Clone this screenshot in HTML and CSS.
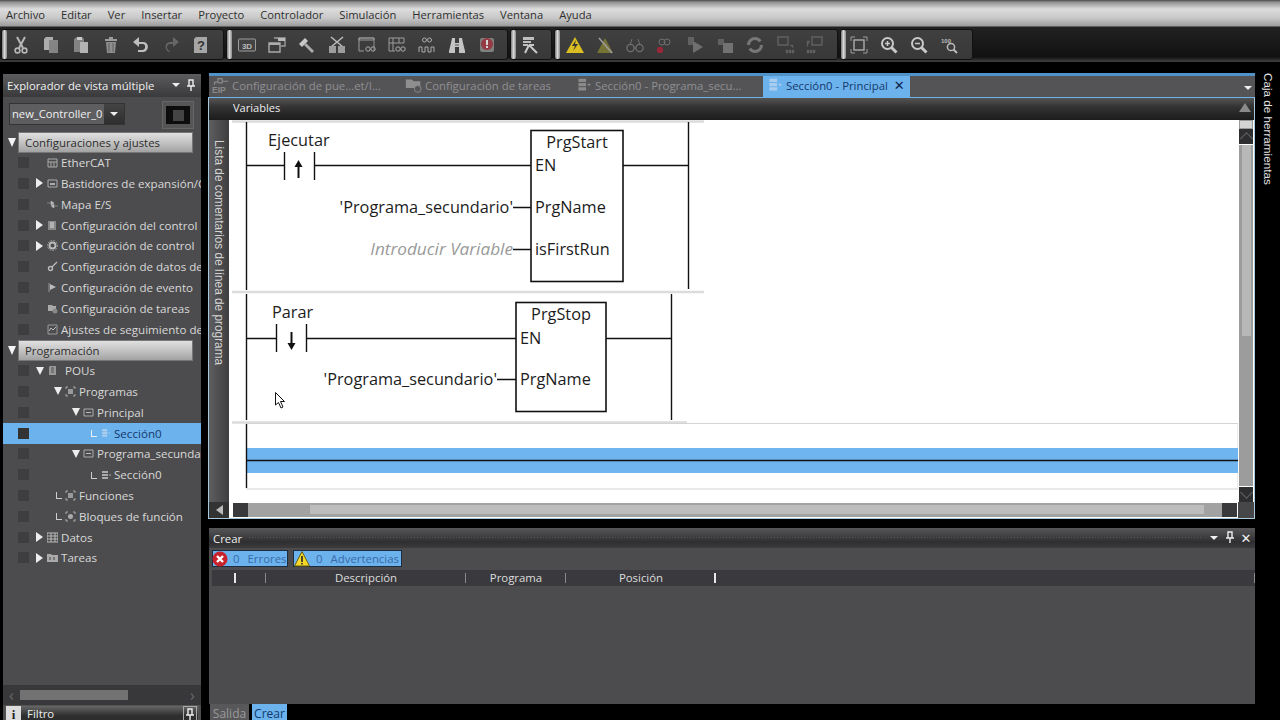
FILE: index.html
```html
<!DOCTYPE html>
<html lang="es">
<head>
  <meta charset="UTF-8" />
  <title>Sysmac Studio</title>
  <link rel="stylesheet" href="styles.css">
</head>
<body>

  <!-- shared icons -->
  <svg class="sprite" xmlns="http://www.w3.org/2000/svg">
    <symbol id="i-cut" viewBox="0 0 20 20"><path d="M6 2l6 11M14 2L8 13" stroke="#c8c8c8" stroke-width="2" fill="none"/><circle cx="6.5" cy="15.5" r="2.4" fill="none" stroke="#c8c8c8" stroke-width="1.6"/><circle cx="13.5" cy="15.5" r="2.4" fill="none" stroke="#c8c8c8" stroke-width="1.6"/></symbol>
    <symbol id="i-copy" viewBox="0 0 20 20"><path d="M5 2h7v13H3V4z" fill="#bdbdbd"/><path d="M8 5h9v13H8z" fill="#8f8f8f"/></symbol>
    <symbol id="i-paste" viewBox="0 0 20 20"><path d="M3 4l3-2h5l2 2v13H3z" fill="#8d8d8d"/><path d="M6 2h5v3H6z" fill="#ddd"/><path d="M9 7h8v11H9z" fill="#c4c4c4"/></symbol>
    <symbol id="i-trash" viewBox="0 0 20 20"><path d="M4 4h12v2H4zM8 2h4v2H8z" fill="#aaa"/><path d="M5 7h10l-1 11H6z" fill="#9a9a9a"/><path d="M8 8v9M12 8v9" stroke="#666"/></symbol>
    <symbol id="i-undo" viewBox="0 0 20 20"><path d="M8 2L2 7l6 5V9h4c3 0 3 6-1 6H7v2h5c6 0 7-10 0-10H8z" fill="#d0d0d0"/></symbol>
    <symbol id="i-redo" viewBox="0 0 20 20"><path d="M12 2l6 5-6 5V9H9c-4 0-4 6 0 7v1c-6-1-6-10 0-10h3z" fill="#6c6c6c"/></symbol>
    <symbol id="i-help" viewBox="0 0 20 20"><path d="M5 2h11v16H3V4z" fill="#b5b5b5"/><text x="10" y="15" class="glyph">?</text></symbol>
    <symbol id="i-3d" viewBox="0 0 20 20"><rect x="1.5" y="4" width="17" height="12" rx="1" fill="#444" stroke="#aaa"/><text x="10" y="13.5" class="glyph-s">3D</text></symbol>
    <symbol id="i-win" viewBox="0 0 20 20"><path d="M7 3h11v8h-4" fill="none" stroke="#aaa" stroke-width="1.4"/><path d="M11 3h7v3h-7z" fill="#ccc"/><path d="M2 8h11v9H2z" fill="none" stroke="#bbb" stroke-width="1.4"/><path d="M2 8h11v2H2z" fill="#bbb"/></symbol>
    <symbol id="i-hammer" viewBox="0 0 20 20"><path d="M2 9l6-6 3 3-6 6z" fill="#ddd"/><path d="M9 8l8 8-2 2-8-8z" fill="#bbb"/></symbol>
    <symbol id="i-cross" viewBox="0 0 20 20"><path d="M4 2l12 10M16 2L4 12" stroke="#ccc" stroke-width="1.6"/><path d="M2 11h7v7H2zM11 11h7v7h-7z" fill="#aaa"/></symbol>
    <symbol id="i-tbl" viewBox="0 0 20 20"><path d="M2 3h15v13" fill="none" stroke="#999"/><path d="M2 3h15v2H2zM2 3v13h5" fill="none" stroke="#aaa"/><circle cx="11" cy="14" r="2.2" fill="none" stroke="#bbb"/><circle cx="16" cy="14" r="2.2" fill="none" stroke="#bbb"/></symbol>
    <symbol id="i-tbl2" viewBox="0 0 20 20"><path d="M2 3h15v5H2zM2 8v8h6M6 3v13M12 3v5" fill="none" stroke="#aaa"/><circle cx="11" cy="14" r="2.2" fill="none" stroke="#bbb"/><circle cx="16" cy="14" r="2.2" fill="none" stroke="#bbb"/></symbol>
    <symbol id="i-wave" viewBox="0 0 20 20"><circle cx="7.5" cy="5" r="2" fill="none" stroke="#bbb"/><circle cx="12.5" cy="5" r="2" fill="none" stroke="#bbb"/><path d="M2 17v-5h3v5h3v-5h3v5h3v-5h3v5" fill="none" stroke="#bbb"/></symbol>
    <symbol id="i-bino" viewBox="0 0 20 20"><path d="M5 3h3v5h4V3h3l1 5 2 8v2h-6v-6H8v6H2v-2l2-8z" fill="#d8d8d8"/><path d="M8 9h4v2H8z" fill="#999"/></symbol>
    <symbol id="i-alert" viewBox="0 0 20 20"><rect x="3" y="3" width="14" height="14" rx="2" fill="#8a8a8a"/><circle cx="10" cy="9" r="6" fill="#a33a45"/><path d="M9 5h2v5H9zM9 11h2v2H9z" fill="#eee"/></symbol>
    <symbol id="i-book" viewBox="0 0 20 20"><path d="M3 2h11v3H3zM3 6h8v2H3zM3 9h5v2H3z" fill="#d0d0d0"/><path d="M9 10l8 8M9 10l-4 8M9 10h5" stroke="#ddd" stroke-width="2" fill="none"/></symbol>
    <symbol id="i-warn" viewBox="0 0 20 20"><path d="M10 2l9 16H1z" fill="#f2d21f"/><path d="M11 5L7 11h3l-2 5 5-7h-3z" fill="#333"/></symbol>
    <symbol id="i-warnoff" viewBox="0 0 20 20"><path d="M10 3l8 15H2z" fill="#7f7b36"/><path d="M4 3l13 15" stroke="#aaa" stroke-width="1.6"/></symbol>
    <symbol id="i-glass" viewBox="0 0 20 20"><circle cx="5.5" cy="13" r="3.6" fill="none" stroke="#777" stroke-width="1.3"/><circle cx="14.5" cy="13" r="3.6" fill="none" stroke="#777" stroke-width="1.3"/><path d="M5 10L7 4M15 10l-2-6M9 13h2" stroke="#777" fill="none"/></symbol>
    <symbol id="i-glassred" viewBox="0 0 20 20"><circle cx="12" cy="7" r="3" fill="none" stroke="#777"/><circle cx="7" cy="7" r="3" fill="none" stroke="#777"/><rect x="2" y="12" width="6" height="6" rx="2" fill="#a8243a"/></symbol>
    <symbol id="i-play" viewBox="0 0 20 20"><path d="M3 2h6v8H3z" fill="#666"/><path d="M8 6l10 6-10 6z" fill="#777"/></symbol>
    <symbol id="i-stop" viewBox="0 0 20 20"><path d="M3 4h6v6H3z" fill="#666"/><path d="M8 8h10v10H8z" fill="#7a7a7a"/></symbol>
    <symbol id="i-cycle" viewBox="0 0 20 20"><circle cx="10" cy="10" r="6.5" fill="none" stroke="#808080" stroke-width="3" stroke-dasharray="16 4"/></symbol>
    <symbol id="i-mon1" viewBox="0 0 20 20"><path d="M3 2h10v8H3z" fill="none" stroke="#666" stroke-width="1.4"/><path d="M15 10h3v3M11 15h2v3h-2zM14 15h2v3h-2zM17 15h2v3h-2z" fill="#666" stroke="#666" stroke-width=".4"/></symbol>
    <symbol id="i-mon2" viewBox="0 0 20 20"><path d="M7 2h10v8H7z" fill="none" stroke="#666" stroke-width="1.4"/><path d="M5 6H2v6M2 15h2v3H2zM5 15h2v3H5zM8 15h2v3H8z" fill="#666" stroke="#666" stroke-width=".4"/></symbol>
    <symbol id="i-fit" viewBox="0 0 20 20"><rect x="5" y="5" width="10" height="10" fill="none" stroke="#bbb" stroke-width="1.4"/><path d="M2 6V2h4M14 2h4v4M18 14v4h-4M6 18H2v-4" fill="none" stroke="#aaa"/></symbol>
    <symbol id="i-zin" viewBox="0 0 20 20"><circle cx="8.5" cy="8.5" r="5.5" fill="none" stroke="#ddd" stroke-width="2"/><path d="M12.5 12.5l5 5" stroke="#ddd" stroke-width="3"/><path d="M6 8.5h5M8.5 6v5" stroke="#ddd" stroke-width="1.5"/></symbol>
    <symbol id="i-zout" viewBox="0 0 20 20"><circle cx="8.5" cy="8.5" r="5.5" fill="none" stroke="#ddd" stroke-width="2"/><path d="M12.5 12.5l5 5" stroke="#ddd" stroke-width="3"/><path d="M6 8.5h5" stroke="#ddd" stroke-width="1.5"/></symbol>
    <symbol id="i-z100" viewBox="0 0 20 20"><text x="7" y="8" class="glyph-t">100</text><circle cx="12" cy="12" r="3.6" fill="none" stroke="#ccc" stroke-width="1.5"/><path d="M14.5 14.5l3.5 3.5" stroke="#ccc" stroke-width="2"/></symbol>
    <symbol id="n-grid" viewBox="0 0 11 11"><path d="M1 2h9v8H1zM1 5h9M4 5v5M7 5v5" fill="none" stroke="#aaa"/></symbol>
    <symbol id="n-rack" viewBox="0 0 11 11"><path d="M1 2h9v7H1z" fill="none" stroke="#aaa"/><path d="M3 5h5v2H3z" fill="#aaa"/></symbol>
    <symbol id="n-io" viewBox="0 0 11 11"><path d="M4 2l3 2-3 2zM0 4h5M7 5L4 7l3 2zM6 7h5" fill="#bbb" stroke="#bbb" stroke-width=".5"/></symbol>
    <symbol id="n-ctrl" viewBox="0 0 11 11"><path d="M1 1h8v9H1z" fill="#888"/><path d="M3 3h4M3 5h4M3 7h4" stroke="#ddd"/></symbol>
    <symbol id="n-gear" viewBox="0 0 11 11"><circle cx="5.5" cy="5.5" r="3" fill="none" stroke="#bbb" stroke-width="2"/><circle cx="5.5" cy="5.5" r="5" fill="none" stroke="#aaa" stroke-dasharray="1.5 1.5"/></symbol>
    <symbol id="n-pen" viewBox="0 0 11 11"><circle cx="3.5" cy="7.5" r="2" fill="none" stroke="#bbb" stroke-width="1.4"/><path d="M5 6l5-5" stroke="#bbb" stroke-width="1.2"/></symbol>
    <symbol id="n-flag" viewBox="0 0 11 11"><path d="M2 1v9" stroke="#999"/><path d="M3 2l6 3-6 3z" fill="#bbb"/></symbol>
    <symbol id="n-task" viewBox="0 0 11 11"><path d="M1 2h4l1 1h3v5H1z" fill="#aaa"/><circle cx="8" cy="8" r="2.5" fill="#888"/></symbol>
    <symbol id="n-trace" viewBox="0 0 11 11"><path d="M1 1h9v9H1z" fill="none" stroke="#999"/><path d="M2 7l2-3 2 2 3-3" fill="none" stroke="#bbb"/></symbol>
    <symbol id="n-pou" viewBox="0 0 11 11"><path d="M3 1h6v9H2V2z" fill="#999"/><path d="M4 3h3M4 5h3M4 7h3" stroke="#555"/></symbol>
    <symbol id="n-prgs" viewBox="0 0 11 11"><path d="M1 3V1h2M8 1h2v2M10 8v2H8M3 10H1V8" fill="none" stroke="#aaa"/><path d="M3 3h5v5H3z" fill="#999"/></symbol>
    <symbol id="n-prg" viewBox="0 0 11 11"><path d="M1 2h9v7H1z" fill="none" stroke="#aaa"/><path d="M3 5.5h5" stroke="#bbb"/></symbol>
    <symbol id="n-sec" viewBox="0 0 11 11"><path d="M2 2h6v2H2zM2 5h6v2H2zM2 8h6v2H2z" fill="#aaa"/><path d="M9 6h2" stroke="#aaa"/></symbol>
    <symbol id="n-fb" viewBox="0 0 11 11"><circle cx="5.5" cy="5.5" r="2.5" fill="#aaa"/><path d="M1 3V1h2M8 1h2v2M10 8v2H8M3 10H1V8" fill="none" stroke="#aaa"/></symbol>
    <symbol id="n-tbl" viewBox="0 0 11 11"><path d="M0 1h11v9H0zM0 4h11M0 7h11M4 1v9M8 1v9" fill="none" stroke="#bbb"/></symbol>
    <symbol id="n-fold" viewBox="0 0 11 11"><path d="M0 2h4l1 1h6v7H0z" fill="#aaa"/><path d="M3 5v3M7 5v3" stroke="#444"/></symbol>
    <symbol id="t-eip" viewBox="0 0 20 20"><text x="0" y="19" class="glyph-e">EIP</text><path d="M3 9V6h4V2h5v5H7M12 5h7" fill="none" stroke="#8a8a8a" stroke-width="1.4"/></symbol>
    <symbol id="t-task" viewBox="0 0 20 20"><path d="M1 3h7l2 2h8v8H1z" fill="#8f8f8f"/><circle cx="15" cy="14" r="4" fill="#555" stroke="#8f8f8f"/></symbol>
    <symbol id="t-sec" viewBox="0 0 20 20"><path d="M4 2h9v4H4zM4 7h9v4H4zM4 12h9v4H4z" fill="#8a8a8a"/><path d="M15 9h3" stroke="#8a8a8a" stroke-width="2"/></symbol>
    <symbol id="t-sec-on" viewBox="0 0 20 20"><path d="M4 2h9v4H4zM4 7h9v4H4zM4 12h9v4H4z" fill="#a9cdee"/><path d="M15 9h3" stroke="#a9cdee" stroke-width="2"/></symbol>
    <symbol id="i-pin" viewBox="0 0 10 12"><path d="M3 1h4v6H3zM1 7h8M5 7v5" fill="none" stroke="#eee" stroke-width="1.4"/></symbol>
  </svg>

  <nav class="menubar">
    <span>Archivo</span><span>Editar</span><span>Ver</span><span>Insertar</span><span>Proyecto</span>
    <span>Controlador</span><span>Simulación</span><span>Herramientas</span><span>Ventana</span><span>Ayuda</span>
  </nav>

  <div class="toolbar">
    <div class="tool-group g1">
      <i class="grip"></i>
      <svg class="tool"><use href="#i-cut"/></svg><svg class="tool"><use href="#i-copy"/></svg><svg class="tool"><use href="#i-paste"/></svg><svg class="tool"><use href="#i-trash"/></svg><svg class="tool"><use href="#i-undo"/></svg><svg class="tool"><use href="#i-redo"/></svg><svg class="tool"><use href="#i-help"/></svg>
    </div>
    <div class="tool-group g2">
      <i class="grip"></i>
      <svg class="tool"><use href="#i-3d"/></svg><svg class="tool"><use href="#i-win"/></svg><svg class="tool"><use href="#i-hammer"/></svg><svg class="tool"><use href="#i-cross"/></svg><svg class="tool"><use href="#i-tbl"/></svg><svg class="tool"><use href="#i-tbl2"/></svg><svg class="tool"><use href="#i-wave"/></svg><svg class="tool"><use href="#i-bino"/></svg><svg class="tool"><use href="#i-alert"/></svg>
    </div>
    <div class="tool-group g3">
      <i class="grip"></i>
      <svg class="tool"><use href="#i-book"/></svg>
    </div>
    <div class="tool-group g4">
      <i class="grip"></i>
      <svg class="tool"><use href="#i-warn"/></svg><svg class="tool"><use href="#i-warnoff"/></svg><svg class="tool"><use href="#i-glass"/></svg><svg class="tool"><use href="#i-glassred"/></svg><svg class="tool"><use href="#i-play"/></svg><svg class="tool"><use href="#i-stop"/></svg><svg class="tool"><use href="#i-cycle"/></svg><svg class="tool"><use href="#i-mon1"/></svg><svg class="tool"><use href="#i-mon2"/></svg>
    </div>
    <div class="tool-group g5">
      <i class="grip"></i>
      <svg class="tool"><use href="#i-fit"/></svg><svg class="tool"><use href="#i-zin"/></svg><svg class="tool"><use href="#i-zout"/></svg><svg class="tool"><use href="#i-z100"/></svg>
    </div>
  </div>

  <div class="workspace">

    <aside class="explorer">
      <div class="explorer-title">
        <span>Explorador de vista múltiple</span>
        <b class="tri-down"></b>
        <svg class="pin"><use href="#i-pin"/></svg>
      </div>
      <div class="controller-row">
        <div class="combo"><span>new_Controller_0</span><em><b class="tri-down"></b></em></div>
        <div class="device"><i></i></div>
      </div>

      <div class="tree">
        <div class="section"><b class="tri-down big"></b><span>Configuraciones y ajustes</span></div>
        <div class="row"><i class="sq"></i><span class="lvl0 twisty"></span><svg class="node"><use href="#n-grid"/></svg>EtherCAT</div>
        <div class="row"><i class="sq"></i><span class="lvl0 twisty closed"></span><svg class="node"><use href="#n-rack"/></svg>Bastidores de expansión/C</div>
        <div class="row"><i class="sq"></i><span class="lvl0 twisty"></span><svg class="node"><use href="#n-io"/></svg>Mapa E/S</div>
        <div class="row"><i class="sq"></i><span class="lvl0 twisty closed"></span><svg class="node"><use href="#n-ctrl"/></svg>Configuración del control</div>
        <div class="row"><i class="sq"></i><span class="lvl0 twisty closed"></span><svg class="node"><use href="#n-gear"/></svg>Configuración de control</div>
        <div class="row"><i class="sq"></i><span class="lvl0 twisty"></span><svg class="node"><use href="#n-pen"/></svg>Configuración de datos de</div>
        <div class="row"><i class="sq"></i><span class="lvl0 twisty"></span><svg class="node"><use href="#n-flag"/></svg>Configuración de evento</div>
        <div class="row"><i class="sq"></i><span class="lvl0 twisty"></span><svg class="node"><use href="#n-task"/></svg>Configuración de tareas</div>
        <div class="row"><i class="sq"></i><span class="lvl0 twisty"></span><svg class="node"><use href="#n-trace"/></svg>Ajustes de seguimiento de</div>

        <div class="section"><b class="tri-down big"></b><span>Programación</span></div>
        <div class="row"><i class="sq"></i><span class="lvl0 twisty open"></span><svg class="node wide"><use href="#n-pou"/></svg>POUs</div>
        <div class="row"><i class="sq"></i><span class="lvl1 twisty open"></span><svg class="node"><use href="#n-prgs"/></svg>Programas</div>
        <div class="row"><i class="sq"></i><span class="lvl2 twisty open"></span><svg class="node"><use href="#n-prg"/></svg>Principal</div>
        <div class="row selected"><i class="sq"></i><span class="lvl3 twisty leaf"></span><svg class="node"><use href="#t-sec-on"/></svg>Sección0</div>
        <div class="row"><i class="sq"></i><span class="lvl2 twisty open"></span><svg class="node"><use href="#n-prg"/></svg>Programa_secundar</div>
        <div class="row"><i class="sq"></i><span class="lvl3 twisty leaf"></span><svg class="node"><use href="#n-sec"/></svg>Sección0</div>
        <div class="row"><i class="sq"></i><span class="lvl1 twisty leaf"></span><svg class="node"><use href="#n-prgs"/></svg>Funciones</div>
        <div class="row"><i class="sq"></i><span class="lvl1 twisty leaf"></span><svg class="node"><use href="#n-fb"/></svg>Bloques de función</div>
        <div class="row"><i class="sq"></i><span class="lvl0 twisty closed"></span><svg class="node"><use href="#n-tbl"/></svg>Datos</div>
        <div class="row"><i class="sq"></i><span class="lvl0 twisty closed"></span><svg class="node"><use href="#n-fold"/></svg>Tareas</div>
      </div>

      <div class="explorer-scroll">
        <span class="chev">‹</span>
        <div class="explorer-thumb"></div>
        <span class="chev right">›</span>
      </div>
      <div class="filter">
        <b class="info">i</b>
        <span>Filtro</span>
        <i class="filter-pin"><svg class="pin"><use href="#i-pin"/></svg></i>
      </div>
    </aside>

    <main class="center">
      <div class="tabs">
        <div class="tab t1"><svg class="tab-icon"><use href="#t-eip"/></svg>Configuración de pue...et/I...</div>
        <div class="tab t2"><svg class="tab-icon"><use href="#t-task"/></svg>Configuración de tareas</div>
        <div class="tab t3"><svg class="tab-icon"><use href="#t-sec"/></svg>Sección0 - Programa_secu...</div>
        <div class="tab active"><svg class="tab-icon"><use href="#t-sec-on"/></svg>Sección0 - Principal<span class="close">✕</span></div>
        <b class="tri-down tabs-menu"></b>
      </div>

      <section class="editor">
        <div class="vars-bar"><span>Variables</span><b class="tri-up"></b></div>
        <div class="comment-strip"><span>Lista de comentarios de línea de programa</span></div>

        <!-- ladder coordinates are in screen pixels -->
        <svg class="ladder" viewBox="229 120 1009 382" xmlns="http://www.w3.org/2000/svg">
          <g class="sep">
            <path d="M232 121.500H704M232 292H704M232 422.500H687"/>
          </g>
          <path class="frame" d="M246 423.500H1238V489H246"/>
          <rect class="band" x="246" y="448" width="992" height="25"/>
          <g class="wire">
            <path d="M246.500 122V290M246.500 294V420M246.500 424V488"/>
            <path d="M688.500 122V289M671.500 294V420"/>
            <path d="M246 460.500H1238"/>
            <!-- rung 1 -->
            <path d="M246 165.500H284M314 165.500H531M623 165.500H688M513 207.500H531M513 249.500H531"/>
            <path d="M284.500 152V180M314.500 152V180"/>
            <rect x="531" y="130.500" width="92" height="151"/>
            <!-- rung 2 -->
            <path d="M246 338.500H276M306 338.500H516M606 338.500H671M497 379.500H516"/>
            <path d="M276.500 324V352M306.500 324V352"/>
            <rect x="516" y="302.500" width="90" height="109"/>
          </g>
          <g class="arrow">
            <path d="M298.500 178V165"/>
            <path class="head" d="M294.500 167L298.500 160L302.500 167Z"/>
            <path d="M291.500 332V345"/>
            <path class="head" d="M287.500 343L291.500 350L295.500 343Z"/>
          </g>
          <g class="lad-text">
            <text x="268" y="146">Ejecutar</text>
            <text x="577" y="148" text-anchor="middle">PrgStart</text>
            <text x="535" y="171">EN</text>
            <text x="513" y="213" text-anchor="end">'Programa_secundario'</text>
            <text x="535" y="213">PrgName</text>
            <text x="513" y="255" text-anchor="end" class="hint">Introducir Variable</text>
            <text x="535" y="255">isFirstRun</text>
            <text x="272" y="318">Parar</text>
            <text x="561" y="320" text-anchor="middle">PrgStop</text>
            <text x="520" y="344">EN</text>
            <text x="497" y="385" text-anchor="end">'Programa_secundario'</text>
            <text x="520" y="385">PrgName</text>
          </g>
          <path class="cursor" d="M275.500 392.500V405L278.500 402.500L281 408L283 407L280.500 401.500H284.500Z"/>
        </svg>

        <div class="vscroll">
          <i class="vs-cap"></i>
          <i class="vs-btn"></i>
          <div class="vs-track"><i class="vs-thumb"></i></div>
          <i class="vs-btn down"></i>
        </div>

        <div class="hscroll">
          <i class="hs-left"><b class="tri-left"></b></i>
          <div class="hs-body">
            <i class="hs-btn"></i>
            <div class="hs-track"><i class="hs-thumb"></i></div>
            <i class="hs-btn"></i>
          </div>
        </div>
        <i class="corner"></i>
      </section>

      <section class="build">
        <div class="build-title">
          <span>Crear</span>
          <i class="dots"></i>
          <b class="tri-down"></b>
          <svg class="pin"><use href="#i-pin"/></svg>
          <span class="close">✕</span>
        </div>
        <div class="build-filters">
          <div class="pill errors">
            <svg class="pill-icon" viewBox="0 0 16 16"><circle cx="8" cy="8" r="7.5" fill="#c8232c"/><path d="M5 5l6 6M11 5l-6 6" stroke="#fff" stroke-width="2.4"/></svg>
            <span>0</span><span>Errores</span>
          </div>
          <div class="pill warnings">
            <svg class="pill-icon" viewBox="0 0 16 16"><path d="M8 .5L15.500 15H.5z" fill="#f4d92a" stroke="#6d5d10"/><path d="M7.200 5h1.600v6H7.200zM7.200 12h1.600v1.500H7.200z" fill="#222"/></svg>
            <span>0</span><span>Advertencias</span>
          </div>
        </div>
        <div class="build-head">
          <span class="bright"></span><span></span><span>Descripción</span><span>Programa</span><span class="bright">Posición</span><span></span>
        </div>
      </section>

      <div class="bottom-tabs">
        <span>Salida</span>
        <span class="on">Crear</span>
      </div>
    </main>

    <aside class="toolbox"><span>Caja de herramientas</span></aside>
  </div>

</body>
</html>
```

FILE: styles.css
```css
* {
  box-sizing: border-box;
  margin: 0;
  padding: 0;
}

html, body {
  width: 1280px;
  height: 720px;
  overflow: hidden;
}

body {
  background: #000;
  color: #ddd;
  font-family: "Open Sans", "Noto Sans", sans-serif;
  font-size: 11.400px;
  display: flex;
  flex-direction: column;
}

.sprite {
  display: none;
}

.glyph {
  font: bold 13px "Liberation Sans", sans-serif;
  fill: #333;
  text-anchor: middle;
}

.glyph-s {
  font: bold 8px "Liberation Sans", sans-serif;
  fill: #ccc;
  text-anchor: middle;
}

.glyph-t {
  font: bold 6px "Liberation Sans", sans-serif;
  fill: #ccc;
  text-anchor: middle;
}

.glyph-e {
  font: bold 10px "Liberation Sans", sans-serif;
  fill: #8a8a8a;
}

/* menu */
.menubar {
  height: 27px;
  flex: none;
  display: flex;
  align-items: center;
  gap: 16px;
  padding: 1px 0 0 6px;
  font-size: 11.200px;
  color: #2f2f2f;
  background: linear-gradient(#4a4a4a 0, #8e8e8e 2px, #dcdcdc 9px, #c8c8c8 18px, #9c9c9c 26px, #222 27px);
}

/* toolbar */
.toolbar {
  height: 35px;
  flex: none;
  display: flex;
  gap: 2px;
  padding: 2px 0 0 1px;
  background: linear-gradient(#222, #111 30px, #3a3a3a 34px);
}

.tool-group {
  height: 31px;
  display: flex;
  align-items: center;
  background: linear-gradient(#404040, #383838);
  border: 1px solid #111;
  border-radius: 3px;
}

.grip {
  width: 5px;
  height: 29px;
  flex: none;
  border-radius: 2px;
  background: linear-gradient(90deg, #777, #d8d8d8 50%, #8a8a8a);
}

.tool {
  width: 30px;
  height: 20px;
  flex: none;
  opacity: 0.88;
}

.g1 { width: 223px; }
.g2 { width: 282px; }
.g3 { width: 42px; }
.g4 { width: 284px; }
.g5 { width: 133px; }
.g1 .grip { margin-right: -1px; }
.g3 .grip { margin-right: -1px; }
.g5 .grip { margin-right: -2px; }

/* workspace */
.workspace {
  flex: 1;
  min-height: 0;
  margin-top: 11px;
  display: flex;
  align-items: stretch;
}

/* left explorer */
.explorer {
  width: 198px;
  margin: 1px 0 0 3px;
  flex: none;
  display: flex;
  flex-direction: column;
  background: #4c4c4e;
  overflow: hidden;
}

.explorer-title {
  height: 23px;
  flex: none;
  display: flex;
  align-items: center;
  padding: 0 5px 1px 4px;
  font-size: 11.300px;
  color: #f0f0f0;
  background: linear-gradient(#5c5c5e, #3a3a3c);
}

.explorer-title span {
  flex: 1;
  white-space: nowrap;
}

.explorer-title .pin {
  margin-left: 6px;
}

.tri-down {
  display: block;
  flex: none;
  width: 0;
  height: 0;
  border: 4px solid transparent;
  border-top: 4px solid #eee;
  border-bottom: 0;
}

.tri-down.big {
  border-width: 9px 4.500px 0;
  border-top-color: #f4f4f4;
}

.tri-up {
  display: block;
  width: 0;
  height: 0;
  border: 6px solid transparent;
  border-bottom: 9px solid #8a8a8a;
  border-top: 0;
}

.tri-left {
  display: block;
  width: 0;
  height: 0;
  border: 5px solid transparent;
  border-right: 7px solid #bbb;
  border-left: 0;
}

.pin {
  width: 10px;
  height: 12px;
  flex: none;
}

.controller-row {
  height: 35px;
  flex: none;
  display: flex;
  align-items: flex-start;
  padding: 6px 7px 0 6px;
  justify-content: space-between;
}

.combo {
  width: 116px;
  height: 22px;
  display: flex;
  background: #5e5e60;
  border: 1px solid #333;
  color: #f0f0f0;
  font-size: 11.200px;
}

.combo span {
  flex: 1;
  padding: 2px 0 0 2px;
  white-space: nowrap;
}

.combo em {
  width: 20px;
  display: flex;
  align-items: center;
  justify-content: center;
  background: linear-gradient(#444, #2e2e2e);
}

.device {
  width: 32px;
  height: 28px;
  margin-top: -2px;
  background: #555;
  border: 1px solid #666;
  display: flex;
  align-items: center;
  justify-content: center;
}

.device i {
  width: 24px;
  height: 18px;
  background: #0d0d0d;
  display: flex;
  align-items: center;
  justify-content: center;
}

.device i::after {
  content: "";
  width: 11px;
  height: 11px;
  background: #444;
}

.tree {
  flex: 1;
  min-height: 0;
  font-size: 11.600px;
}

.section {
  height: 20.800px;
  display: flex;
  align-items: center;
  padding-left: 5px;
  gap: 2px;
  font-size: 11.400px;
}

.section span {
  width: 175px;
  height: 21px;
  line-height: 19px;
  padding-left: 6px;
  color: #2d2d2d;
  background: linear-gradient(#e0e0e0, #bdbdbd 60%, #a2a2a2);
  border: 1px solid #777;
}

.row {
  height: 20.800px;
  display: flex;
  align-items: center;
  padding: 0 0 1px 15px;
  white-space: nowrap;
  color: #d8d8d8;
}

.row.selected {
  background: #6cb3ee;
  color: #14386b;
}

.sq {
  width: 11px;
  height: 11px;
  flex: none;
  background: #3e3e40;
}

.selected .sq {
  background: #333;
}

.twisty {
  width: 13px;
  height: 12px;
  flex: none;
  position: relative;
}

.twisty.closed::before {
  content: "";
  position: absolute;
  left: 2px;
  top: 1px;
  border: 5px solid transparent;
  border-left: 7px solid #eee;
  border-right: 0;
}

.twisty.open::before {
  content: "";
  position: absolute;
  left: 2px;
  top: 2px;
  border: 4px solid transparent;
  border-top: 8px solid #eee;
  border-bottom: 0;
}

.twisty.leaf::before {
  content: "";
  position: absolute;
  left: 4px;
  top: 3px;
  width: 5px;
  height: 6px;
  border-left: 1px solid #ccc;
  border-bottom: 1px solid #ccc;
}

.selected .twisty.leaf::before {
  border-color: #e8f2fb;
}

.lvl0 { margin-left: 5px; }
.lvl1 { margin-left: 23px; }
.lvl2 { margin-left: 41px; }
.lvl3 { margin-left: 58px; }

.node {
  width: 11px;
  height: 11px;
  flex: none;
  margin-right: 3px;
}

.node.wide {
  margin-right: 7px;
}

.explorer-scroll {
  height: 20px;
  flex: none;
  display: flex;
  align-items: center;
  background: #38383a;
  color: #6a6a6a;
}

.chev {
  width: 17px;
  text-align: center;
  font-size: 16px;
  line-height: 16px;
}

.explorer-thumb {
  width: 108px;
  height: 10px;
  background: #727272;
}

.chev.right {
  margin-left: auto;
}

.filter {
  height: 15px;
  flex: none;
  margin: 0 2px;
  display: flex;
  align-items: flex-start;
  background: linear-gradient(#666, #2e2e2e 70%);
  border: 1px solid #555;
  border-bottom: 0;
  color: #eee;
  overflow: hidden;
}

.info {
  width: 15px;
  height: 18px;
  flex: none;
  background: #ddd;
  color: #222;
  text-align: center;
  font-family: "Liberation Serif", serif;
  font-size: 13px;
  line-height: 17px;
  margin-right: 6px;
}

.filter span {
  flex: 1;
  line-height: 16px;
}

.filter-pin {
  width: 14px;
  height: 16px;
  flex: none;
  border: 1px solid #aaa;
  margin-right: 1px;
  display: flex;
  align-items: center;
  justify-content: center;
}

/* centre column */
.center {
  width: 1047px;
  margin-left: 7px;
  flex: none;
  display: flex;
  flex-direction: column;
}

.tabs {
  height: 24px;
  flex: none;
  display: flex;
  align-items: stretch;
  margin-left: 1px;
  font-size: 11.350px;
  background: #545456;
  border-top: 3px solid #4f93c9;
  position: relative;
}

.tab {
  display: flex;
  align-items: center;
  flex: none;
  color: #8f8f93;
  white-space: nowrap;
  padding: 0 0 2px 3px;
}

.t1 { width: 193px; }
.t2 { width: 170px; }
.t3 { width: 192px; }

.tab.active {
  width: 147px;
  margin-left: -1px;
  background: #6cb3ee;
  color: #14386b;
}

.tab-icon {
  width: 17px;
  height: 17px;
  margin-right: 3px;
  flex: none;
}

.tab .close {
  margin-left: 6px;
  font-size: 13px;
  font-weight: bold;
  font-family: "DejaVu Sans", sans-serif;
  color: #10264a;
}

.tabs-menu {
  position: absolute;
  right: 3px;
  top: 10px;
}

.editor {
  height: 422px;
  flex: none;
  display: grid;
  grid-template-columns: 20px 1009px 1fr;
  grid-template-rows: 22px 382px 1fr;
  background: #fff;
  border: 1px solid #a8c8e0;
  border-top-color: #6cb3ee;
}

.vars-bar {
  grid-column: 1 / 4;
  display: flex;
  align-items: center;
  justify-content: space-between;
  padding: 0 3px 3px 24px;
  font-size: 11.100px;
  color: #eee;
  background: linear-gradient(#555, #333 40%, #1c1c1c);
}

.comment-strip {
  background: linear-gradient(90deg, #5e5e60, #3e3e40);
  color: #d4d4d4;
  font-family: "Liberation Sans", sans-serif;
  font-size: 11.850px;
  padding-top: 20px;
  display: flex;
  justify-content: center;
}

.comment-strip span {
  writing-mode: vertical-rl;
  white-space: nowrap;
}

.ladder {
  width: 1009px;
  height: 382px;
  display: block;
}

.sep path {
  stroke: #dcdcdc;
  stroke-width: 2.500;
  fill: none;
}

.frame {
  fill: none;
  stroke: #d4d4d4;
}

.band {
  fill: #6fb6f0;
}

.wire {
  stroke: #111;
  fill: none;
  stroke-width: 1.400;
}

.wire rect {
  stroke-width: 1.600;
}

.arrow {
  stroke: #111;
  stroke-width: 2;
  fill: none;
}

.arrow .head {
  fill: #111;
  stroke: none;
}

.lad-text text {
  font-size: 16.300px;
  fill: #1c1c1c;
}

.lad-text .hint {
  fill: #9a9a9a;
  font-size: 17.200px;
  font-style: italic;
}

.cursor {
  fill: #fff;
  stroke: #111;
  stroke-width: 1;
}

.vscroll {
  grid-row: 2 / 3;
  grid-column: 3;
  display: flex;
  flex-direction: column;
  padding: 0 1px;
  background: #fff;
}

.vs-cap {
  height: 9px;
  flex: none;
  background: #d4d4d4;
  border: 1px solid #999;
}

.vs-btn {
  height: 16px;
  flex: none;
  background: #2e2e30;
  border-bottom: 1px solid #fff;
  display: flex;
  justify-content: center;
}

.vs-btn::after {
  content: "";
  width: 8px;
  height: 8px;
  margin-top: 5px;
  border-left: 1px solid #666;
  border-top: 1px solid #666;
  transform: rotate(45deg);
}

.vs-btn.down {
  border-bottom: 0;
  border-top: 1px solid #fff;
}

.vs-btn.down::after {
  margin-top: 1px;
  transform: rotate(225deg);
}

.vs-track {
  flex: 1;
  background: #9c9c9c;
}

.vs-thumb {
  display: block;
  width: 9px;
  height: 191px;
  margin: 0 auto;
  background: #b8b8b8;
}

.hscroll {
  grid-row: 3;
  grid-column: 1 / 3;
  display: flex;
}

.hs-left {
  width: 20px;
  flex: none;
  background: #333;
  display: flex;
  align-items: center;
  justify-content: center;
}

.hs-body {
  flex: 1;
  display: flex;
  padding: 1px 1px 1px 4px;
  background: #fff;
}

.hs-btn {
  width: 15px;
  flex: none;
  background: #3a3a3c;
}

.hs-track {
  flex: 1;
  padding: 0;
  background: #a2a2a2;
}

.hs-thumb {
  display: block;
  height: 9px;
  margin: 2px 18px 0 62px;
  background: #bdbdbd;
}

.corner {
  grid-row: 3;
  grid-column: 3;
  background: #474749;
}

/* build panel */
.build {
  height: 176px;
  flex: none;
  margin: 9px 0 0 1px;
  background: #4c4c4e;
  width: 1046px;
}

.build-title {
  height: 20px;
  display: flex;
  align-items: center;
  padding: 0 2px 0 4px;
  color: #eee;
  background: linear-gradient(#575759, #2f2f31 70%, #3c3c3e);
}

.dots {
  flex: 1;
  height: 4px;
  margin: 0 8px 0 6px;
  background-image: radial-gradient(#555 0.7px, transparent 0.8px);
  background-size: 3px 3px;
}

.build-title .pin {
  margin: -2px 4px 0 7px;
}

.build-title .close {
  font-family: "DejaVu Sans", sans-serif;
  font-size: 13px;
  color: #f0f0f0;
  width: 14px;
  text-align: center;
}

.build-filters {
  display: flex;
  gap: 5px;
  padding: 2px 0 0 3px;
  height: 22px;
}

.pill {
  height: 17px;
  display: flex;
  align-items: center;
  gap: 8px;
  background: #6cb3ee;
  border: 1px solid #1d2c3e;
  color: #3a6aa8;
  position: relative;
}

.errors {
  width: 76px;
  padding-left: 20px;
}

.warnings {
  width: 109px;
  padding-left: 22px;
}

.pill-icon {
  width: 16px;
  height: 16px;
  position: absolute;
  left: -1px;
  top: 0;
}

.warnings .pill-icon {
  left: 0;
}

.build-head {
  height: 16px;
  display: grid;
  grid-template-columns: 24px 30px 200px 100px 150px 1fr;
  margin-left: 3px;
  background: #3a3a3e;
  color: #ddd;
  text-align: center;
  line-height: 16px;
}

.build-head span {
  position: relative;
}

.build-head span::after {
  content: "";
  position: absolute;
  right: 0;
  top: 3px;
  height: 10px;
  width: 1px;
  background: #8a8a8a;
}

.build-head .bright::after {
  width: 2px;
  background: #e8e8e8;
}

.bottom-tabs {
  flex: 1;
  display: flex;
  gap: 3px;
  margin-left: 2px;
}

.bottom-tabs span {
  width: 39px;
  height: 16px;
  line-height: 20px;
  font-size: 12px;
  text-align: center;
  background: #58585a;
  color: #9a9a9a;
}

.bottom-tabs .on {
  width: 35px;
  background: #6cb3ee;
  color: #14386b;
}

/* right strip */
.toolbox {
  flex: 1;
  padding: 0 0 0 7px;
  font-family: "Liberation Sans", sans-serif;
  font-size: 11.700px;
  color: #e4e4e4;
}

.toolbox span {
  writing-mode: vertical-rl;
  white-space: nowrap;
}
```
